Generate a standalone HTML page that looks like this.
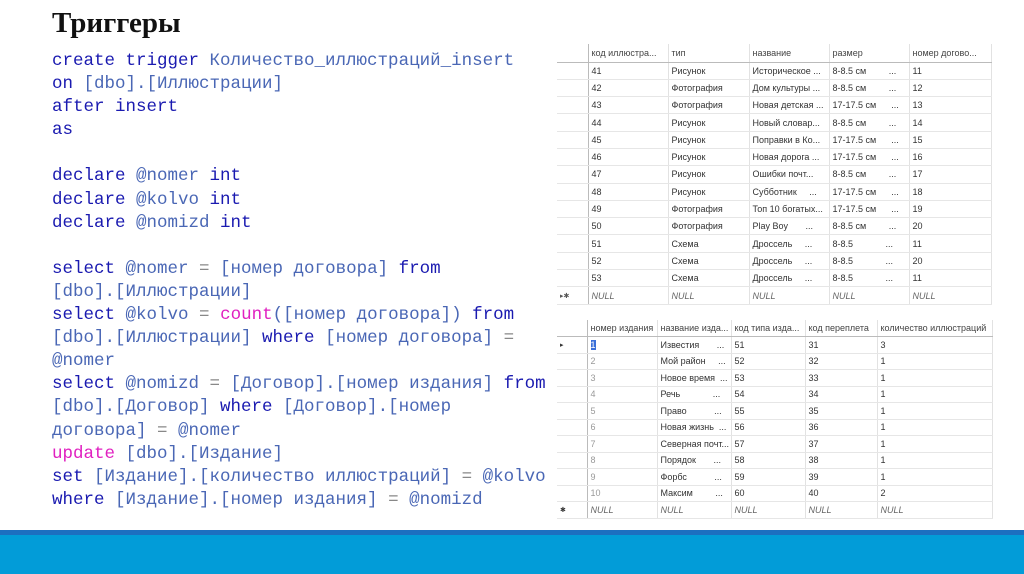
<!DOCTYPE html>
<html><head><meta charset="utf-8"><style>
body{margin:0;width:1024px;height:574px;background:#fff;position:relative;overflow:hidden}
h1{position:absolute;left:52px;top:7px;margin:0;font:bold 29px "Liberation Serif","Noto Serif CJK SC",serif;color:#111}
pre{position:absolute;left:52px;top:50px;margin:0;font:17.5px/23.1px "Liberation Mono","Noto Sans CJK SC",monospace;color:#4a67b5}
.k{color:#1a1ab0}.m{color:#e020c0}.g{color:#888}
table{position:absolute;border-collapse:collapse;table-layout:fixed;font:9px "Liberation Sans","Noto Sans CJK SC",sans-serif;color:#333}
td{border-bottom:1px solid #e6e6e6;border-right:1px solid #e2e2e2;padding:0 0 0 3px;white-space:nowrap;overflow:hidden}
td:first-child{border-right:1px solid #bbb}
tr.h td{color:#444;border-bottom:1px solid #bbb}
i{color:#666}
.bar1{position:absolute;left:0;top:530px;width:1024px;height:5px;background:#1c6fc0}
.bar2{position:absolute;left:0;top:535px;width:1024px;height:39px;background:#029cd8}
</style></head><body>
<h1>Триггеры</h1>
<pre><span class="k">create trigger</span> Количество_иллюстраций_insert
<span class="k">on</span> [dbo].[Иллюстрации]
<span class="k">after insert</span>
<span class="k">as</span>

<span class="k">declare</span> @nomer <span class="k">int</span>
<span class="k">declare</span> @kolvo <span class="k">int</span>
<span class="k">declare</span> @nomizd <span class="k">int</span>

<span class="k">select</span> @nomer <span class="g">=</span> [номер договора] <span class="k">from</span>
[dbo].[Иллюстрации]
<span class="k">select</span> @kolvo <span class="g">=</span> <span class="m">count</span>([номер договора]) <span class="k">from</span>
[dbo].[Иллюстрации] <span class="k">where</span> [номер договора] <span class="g">=</span>
@nomer
<span class="k">select</span> @nomizd <span class="g">=</span> [Договор].[номер издания] <span class="k">from</span>
[dbo].[Договор] <span class="k">where</span> [Договор].[номер
договора] <span class="g">=</span> @nomer
<span class="m">update</span> [dbo].[Издание]
<span class="k">set</span> [Издание].[количество иллюстраций] <span class="g">=</span> @kolvo
<span class="k">where</span> [Издание].[номер издания] <span class="g">=</span> @nomizd</pre>

<table style="left:557px;top:44px;width:434px">
<colgroup><col style="width:31px"><col style="width:80px"><col style="width:81px"><col style="width:80px"><col style="width:80px"><col style="width:82px"></colgroup>
<tr class="h" style="height:18px"><td></td><td>код иллюстра...</td><td>тип</td><td>название</td><td>размер</td><td>номер догово...</td></tr>
<tr style="height:17.3px"><td></td><td>41</td><td>Рисунок</td><td>Историческое ...</td><td>8-8.5 см &nbsp; &nbsp; &nbsp; &nbsp; ...</td><td>11</td></tr>
<tr style="height:17.3px"><td></td><td>42</td><td>Фотография</td><td>Дом культуры ...</td><td>8-8.5 см &nbsp; &nbsp; &nbsp; &nbsp; ...</td><td>12</td></tr>
<tr style="height:17.3px"><td></td><td>43</td><td>Фотография</td><td>Новая детская ...</td><td>17-17.5 см &nbsp; &nbsp; &nbsp;...</td><td>13</td></tr>
<tr style="height:17.3px"><td></td><td>44</td><td>Рисунок</td><td>Новый словар...</td><td>8-8.5 см &nbsp; &nbsp; &nbsp; &nbsp; ...</td><td>14</td></tr>
<tr style="height:17.3px"><td></td><td>45</td><td>Рисунок</td><td>Поправки в Ко...</td><td>17-17.5 см &nbsp; &nbsp; &nbsp;...</td><td>15</td></tr>
<tr style="height:17.3px"><td></td><td>46</td><td>Рисунок</td><td>Новая дорога ...</td><td>17-17.5 см &nbsp; &nbsp; &nbsp;...</td><td>16</td></tr>
<tr style="height:17.3px"><td></td><td>47</td><td>Рисунок</td><td>Ошибки почт...</td><td>8-8.5 см &nbsp; &nbsp; &nbsp; &nbsp; ...</td><td>17</td></tr>
<tr style="height:17.3px"><td></td><td>48</td><td>Рисунок</td><td>Субботник &nbsp; &nbsp; ...</td><td>17-17.5 см &nbsp; &nbsp; &nbsp;...</td><td>18</td></tr>
<tr style="height:17.3px"><td></td><td>49</td><td>Фотография</td><td>Топ 10 богатых...</td><td>17-17.5 см &nbsp; &nbsp; &nbsp;...</td><td>19</td></tr>
<tr style="height:17.3px"><td></td><td>50</td><td>Фотография</td><td>Play Boy &nbsp; &nbsp; &nbsp; ...</td><td>8-8.5 см &nbsp; &nbsp; &nbsp; &nbsp; ...</td><td>20</td></tr>
<tr style="height:17.3px"><td></td><td>51</td><td>Схема</td><td>Дроссель &nbsp; &nbsp; ...</td><td>8-8.5 &nbsp; &nbsp; &nbsp; &nbsp; &nbsp; &nbsp; ...</td><td>11</td></tr>
<tr style="height:17.3px"><td></td><td>52</td><td>Схема</td><td>Дроссель &nbsp; &nbsp; ...</td><td>8-8.5 &nbsp; &nbsp; &nbsp; &nbsp; &nbsp; &nbsp; ...</td><td>20</td></tr>
<tr style="height:17.3px"><td></td><td>53</td><td>Схема</td><td>Дроссель &nbsp; &nbsp; ...</td><td>8-8.5 &nbsp; &nbsp; &nbsp; &nbsp; &nbsp; &nbsp; ...</td><td>11</td></tr>
<tr style="height:17.3px"><td style="font-size:7px;color:#555">▸✱</td><td><i>NULL</i></td><td><i>NULL</i></td><td><i>NULL</i></td><td><i>NULL</i></td><td><i>NULL</i></td></tr>
</table>

<table style="left:557px;top:320px;width:435px">
<colgroup><col style="width:30px"><col style="width:70px"><col style="width:74px"><col style="width:74px"><col style="width:72px"><col style="width:115px"></colgroup>
<tr class="h" style="height:16.5px"><td></td><td>номер издания</td><td>название изда...</td><td>код типа изда...</td><td>код переплета</td><td>количество иллюстраций</td></tr>
<tr style="height:16.5px"><td style="font-size:7px">▸</td><td><span style="background:#3a6fd8;color:#fff">1</span></td><td>Известия &nbsp; &nbsp; &nbsp; ...</td><td>51</td><td>31</td><td>3</td></tr>
<tr style="height:16.5px"><td></td><td style="color:#999">2</td><td>Мой район &nbsp; &nbsp; ...</td><td>52</td><td>32</td><td>1</td></tr>
<tr style="height:16.5px"><td></td><td style="color:#999">3</td><td>Новое время &nbsp;...</td><td>53</td><td>33</td><td>1</td></tr>
<tr style="height:16.5px"><td></td><td style="color:#999">4</td><td>Речь &nbsp; &nbsp; &nbsp; &nbsp; &nbsp; &nbsp; ...</td><td>54</td><td>34</td><td>1</td></tr>
<tr style="height:16.5px"><td></td><td style="color:#999">5</td><td>Право &nbsp; &nbsp; &nbsp; &nbsp; &nbsp; ...</td><td>55</td><td>35</td><td>1</td></tr>
<tr style="height:16.5px"><td></td><td style="color:#999">6</td><td>Новая жизнь &nbsp;...</td><td>56</td><td>36</td><td>1</td></tr>
<tr style="height:16.5px"><td></td><td style="color:#999">7</td><td>Северная почт...</td><td>57</td><td>37</td><td>1</td></tr>
<tr style="height:16.5px"><td></td><td style="color:#999">8</td><td>Порядок &nbsp; &nbsp; &nbsp; ...</td><td>58</td><td>38</td><td>1</td></tr>
<tr style="height:16.5px"><td></td><td style="color:#999">9</td><td>Форбс &nbsp; &nbsp; &nbsp; &nbsp; &nbsp; ...</td><td>59</td><td>39</td><td>1</td></tr>
<tr style="height:16.5px"><td></td><td style="color:#999">10</td><td>Максим &nbsp; &nbsp; &nbsp; &nbsp; ...</td><td>60</td><td>40</td><td>2</td></tr>
<tr style="height:16.5px"><td style="font-size:7px">✱</td><td><i>NULL</i></td><td><i>NULL</i></td><td><i>NULL</i></td><td><i>NULL</i></td><td><i>NULL</i></td></tr>
</table>

<div class="bar1"></div><div class="bar2"></div>
</body></html>
